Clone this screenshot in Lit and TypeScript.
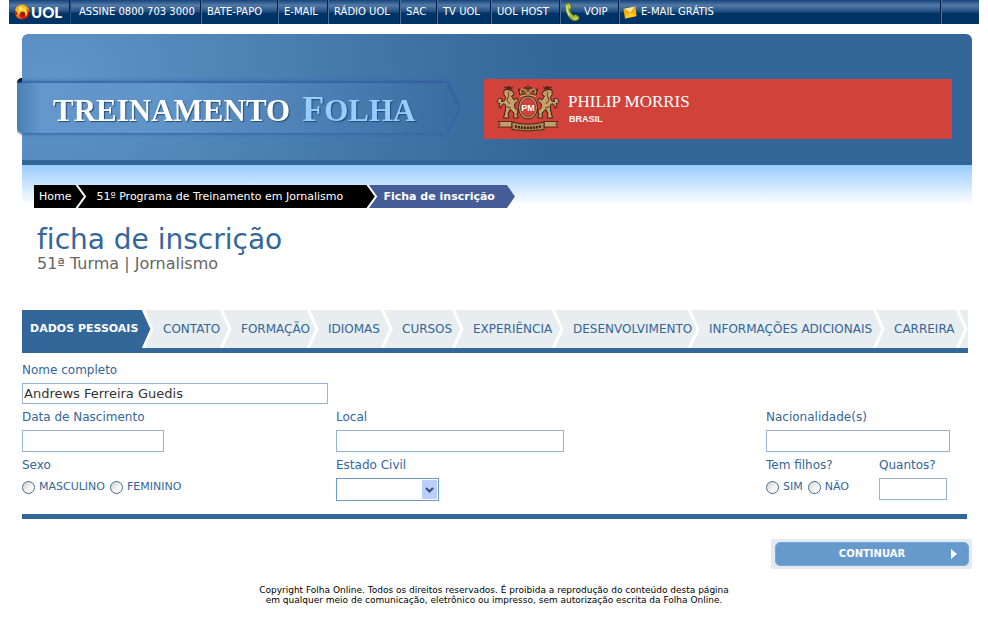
import { LitElement, html, css, svg } from "lit";
import { customElement } from "lit/decorators.js";

const uolGlobe = html`<svg class="globe" width="16" height="16" viewBox="0 0 16 16" aria-hidden="true">
  <circle cx="8" cy="8" r="7.6" fill="#c8200c" />
  <path d="M1 6A7.6 7.6 0 0 1 10 .8Q15 3 15.400 8Q13.500 4.500 10 4Q5 4 3.500 8Q2 8 1 6Z" fill="#f7b519" />
  <path d="M3.500 9.500A5 5 0 0 1 13 6.500Q14.500 10 11 13Q12.500 8.500 9 7.500Q5.500 7 5 12Z" fill="#fbd33a" />
  <circle cx="9" cy="10" r="2" fill="#8b1a08" />
  <path d="M2 11Q4 15 8 14.800Q5 13.500 4.500 10Z" fill="#f08a12" />
  <circle cx="6.500" cy="4.200" r="1.500" fill="#fff2b0" />
</svg>`;

const phoneIcon = html`<svg width="16" height="20" viewBox="0 0 16 20" aria-hidden="true">
  <path d="M1 3Q3 .5 5.500 1Q7.500 3.500 7 6.500L5.500 8Q6.500 11.500 9.500 13.500L11.500 12.500Q14.500 13.500 15.500 16Q14 19 11 19Q7 18.500 4 14Q1 9 1 3Z" fill="#a3ba3e" stroke="#4d6a18" stroke-width=".8" />
  <path d="M2.500 3.500Q2.500 9 5.500 13.500" fill="none" stroke="#dcea86" stroke-width="1.400" />
  <path d="M9.500 17Q12.500 17.500 14 15.500M5 2.500L6 6" fill="none" stroke="#dbe88a" />
</svg>`;

const mailIcon = html`<svg width="14" height="13" viewBox="0 0 14 13" aria-hidden="true">
  <path d="M.5 3L12.500 .5L13.500 10L2 12.500Z" fill="#ffb400" />
  <path d="M.5 3L12.500 .5L7.500 7.500Z" fill="#ffe896" />
  <path d="M.5 3L7.500 7.500L12.500 .5" fill="none" stroke="#e87c00" stroke-width=".9" />
  <path d="M2 12.500L7 7L13.500 10Z" fill="#ffcf2e" />
</svg>`;

const lion = svg`
  <path d="M7 4L11 3.500L16 5.500L17 8.500L14.500 10L17 14L20 12L21 14.500L17.500 18L18 22L21 25L20 29L21.500 32H16.500L17 27L13 23.500L11 28L12 32H6.500L8 26L9 20L7 17.500Q3 20 3.500 22.500Q1 21 3 17.500Q0 18 .5 14Q2 11 5 13Q6.500 15 4 15.500L7 15L9 12Q5.500 9 7 4Z" fill="#c4a06a" stroke="#3b1d14" stroke-width="1" />
  <path d="M8 2.500L7 0L10 1.500L12 -.5L13.500 1.500L16 .5L15 3.500Z" fill="#4a2418" />
  <path d="M11 6L12 9L10 14L13 18M10 21L14 22" fill="none" stroke="#5a3020" stroke-width=".9" />`;

const crest = html`<svg class="crest" width="62" height="46" viewBox="0 0 62 46" aria-hidden="true">
  ${lion}
  <g transform="translate(62 0) scale(-1 1)">${lion}</g>
  <path d="M23 9L21.500 3L25.500 4.500L28 1L31 3L34 1L36.500 4.500L40.500 3L39 9Z" fill="#8d4a2c" stroke="#3b1d14" />
  <path d="M24 8Q22 4 26 3Q29 4 31 8Q33 4 36 3Q40 4 38 8" fill="none" stroke="#c4a06a" stroke-width="1.200" />
  <path d="M23 10.500Q31 7.500 39 10.500" fill="none" stroke="#c4a06a" stroke-width="1.500" />
  <path d="M31 -1V3" stroke="#3b1d14" />
  <ellipse cx="31" cy="21.500" rx="9.500" ry="11.500" fill="#c4a06a" stroke="#3b1d14" />
  <ellipse cx="31" cy="21.500" rx="7.500" ry="9.500" fill="#d1423c" stroke="#5a3020" stroke-width=".7" />
  <text class="mono" x="31" y="25" text-anchor="middle">PM</text>
  <path d="M1 35.500H15V41H1L3.500 38.300Z" fill="#c4a06a" stroke="#3b1d14" stroke-width=".8" />
  <path d="M61 35.500H47V41H61L58.500 38.300Z" fill="#c4a06a" stroke="#3b1d14" stroke-width=".8" />
  <path d="M15 36Q31 40.500 47 36V43.500Q31 46.500 15 43.500Z" fill="#b08a58" stroke="#3b1d14" stroke-width=".9" />
  <path d="M18 40.300Q31 43.500 44 40.300" fill="none" stroke="#3b1d14" stroke-width="2.600" stroke-dasharray="2 1" />
</svg>`;

interface Link { label: string; icon?: unknown }

const portalLinks: Link[] = [
  { label: "ASSINE 0800 703 3000" },
  { label: "BATE-PAPO" },
  { label: "E-MAIL" },
  { label: "RÁDIO UOL" },
  { label: "SAC" },
  { label: "TV UOL" },
  { label: "UOL HOST" },
  { label: "VOIP", icon: phoneIcon },
  { label: "E-MAIL GRÁTIS", icon: mailIcon },
];

const steps = [
  "DADOS PESSOAIS", "CONTATO", "FORMAÇÃO", "IDIOMAS", "CURSOS",
  "EXPERIÊNCIA", "DESENVOLVIMENTO", "INFORMAÇÕES ADICIONAIS", "CARREIRA",
];

@customElement("portal-bar")
export class PortalBar extends LitElement {
  static styles = css`
    :host { display: block; }
    .bar {
      display: grid;
      grid-template-columns: 61px 131px 77px 50px 72px 37px 54px 69px 59px 1fr 38px;
      height: 24px;
      background: linear-gradient(#17437a, #517aa6 22%, #1f4b7f 50%, #003366 54%, #003366);
      font: 10px/24px "DejaVu Sans", Verdana, sans-serif;
    }
    .bar > * {
      display: flex;
      align-items: center;
      gap: 4px;
      padding-left: 5px;
      border-left: 1px solid #4a7099;
      box-shadow: -1px 0 #00214a;
      color: #fff;
      text-decoration: none;
      white-space: nowrap;
    }
    .bar > .first { border-left-color: #2a5385; padding-left: 8px; }
    .bar > .iconic { padding-left: 3px; }
    .bar > .logo {
      border: 0;
      box-shadow: none;
      gap: 1px;
      padding-left: 5px;
      font: 900 15px/24px "Lato", sans-serif;
    }
    .globe { flex: none; }
  `;
  render() {
    return html`<nav class="bar" aria-label="UOL">
      <a class="logo" href="#">${uolGlobe}<span>UOL</span></a>
      ${portalLinks.map((l, i) => html`<a class=${i === 0 ? "first" : l.icon ? "iconic" : ""} href="#">${l.icon ?? ""}<span>${l.label}</span></a>`)}
      <span></span>
    </nav>`;
  }
}

@customElement("site-header")
export class SiteHeader extends LitElement {
  static styles = css`
    :host { display: block; }
    .head {
      display: flex;
      align-items: flex-start;
      height: 126px;
      border-bottom: 5px solid #336699;
      border-radius: 6px 6px 0 0;
      background: radial-gradient(ellipse 500px 420px at 30px 50px, #5f95c8, #336699);
      box-shadow: 0 1px #6d9fce;
    }
    .ribbon {
      position: relative;
      flex: none;
      width: 442px;
      margin: 49px 25px 0 -5px;
      clip-path: inset(-10px -10px -10px 0);
    }
    .shade { filter: drop-shadow(0 -1px 2px #2c549a) drop-shadow(0 1px 1px #3d70a8); }
    .fold {
      position: absolute;
      left: 0;
      top: -5px;
      width: 5px;
      height: 8px;
      border-radius: 5px 0 0 0;
      background: #000;
    }
    .band {
      position: relative;
      display: flex;
      align-items: baseline;
      gap: 12px;
      height: 50px;
      padding-left: 36px;
      clip-path: polygon(0 0, 429px 0, 100% 50%, 429px 100%, 5px 100%, 0 46px);
      background: linear-gradient(90deg, #4880b5, #6497cb 24px, #5f94c8 150px, #3a6ca0);
      font: bold 31px/52px "Liberation Serif", serif;
      color: #fff;
      text-shadow: 1px 1px 1px #234a75;
    }
    .folha { color: #99ccff; }
    .initial { font-size: 36px; }
    .sponsor {
      flex: 1;
      display: flex;
      align-items: center;
      height: 60px;
      margin: 45px 20px 0 0;
      padding-left: 13px;
      gap: 9px;
      background: #d1423a;
      color: #fff;
      text-decoration: none;
    }
    .crest { flex: none; overflow: visible; }
    .mono { font: bold 9px "Liberation Sans", sans-serif; fill: #fff; }
    .name { font: 17px/20px "Liberation Serif", serif; display: block; white-space: nowrap; }
    .country { font: bold 9px/14px "Liberation Sans", sans-serif; display: block; padding-left: 1px; }
  `;
  render() {
    return html`<header class="head">
      <div class="ribbon">
        <span class="fold"></span>
        <div class="shade">
          <div class="band"><span>TREINAMENTO</span><span class="folha"><span class="initial">F</span>OLHA</span></div>
        </div>
      </div>
      <a class="sponsor" href="#">${crest}<span><span class="name">PHILIP MORRIS</span><span class="country">BRASIL</span></span></a>
    </header>`;
  }
}

@customElement("crumb-trail")
export class CrumbTrail extends LitElement {
  static styles = css`
    :host { display: block; }
    .trail {
      display: flex;
      height: 23px;
      font: 11px/23px "DejaVu Sans", Verdana, sans-serif;
      color: #fff;
    }
    a { color: #fff; text-decoration: none; background: #000; padding: 0 4px 0 5px; white-space: nowrap; }
    .program { padding: 0 8px 0 9px; width: 262px; }
    .current {
      font-weight: bold;
      background: #465c96;
      margin-left: -1px;
      padding: 0 20px 0 6px;
      clip-path: polygon(0 0, calc(100% - 8px) 0, 100% 50%, calc(100% - 8px) 100%, 0 100%);
      white-space: nowrap;
    }
    svg { flex: none; }
    .before { fill: #000; }
    .after { fill: #000; }
    .after.blue { fill: #465c96; }
    .stroke { fill: none; stroke: #fff; stroke-width: 2; }
  `;
  private chevron(next: string) {
    return html`<svg width="12" height="23" viewBox="0 0 12 23" aria-hidden="true">
      <rect class=${"after " + next} width="12" height="23" />
      <path class="before" d="M0 0H1L10 11.500L1 23H0Z" />
      <path class="stroke" d="M1 -1L10 11.500L1 24" />
    </svg>`;
  }
  render() {
    return html`<nav class="trail" aria-label="Navegação">
      <a href="#">Home</a>${this.chevron("")}
      <a class="program" href="#">51º Programa de Treinamento em Jornalismo</a>${this.chevron("blue")}
      <span class="current" aria-current="page">Ficha de inscrição</span>
    </nav>`;
  }
}

@customElement("step-tabs")
export class StepTabs extends LitElement {
  static properties = { current: { type: Number } };
  declare current: number;
  constructor() {
    super();
    this.current = 0;
  }
  static styles = css`
    :host { display: block; }
    .tabs {
      display: grid;
      grid-template-columns: 132fr 78fr 87fr 74fr 71fr 100fr 136fr 185fr 83fr;
      height: 38px;
      border-bottom: 5px solid #336699;
      background: #e8edef;
      font: 12px/38px "DejaVu Sans", Verdana, sans-serif;
    }
    .tab {
      display: flex;
      justify-content: space-between;
      min-width: 0;
      padding-left: 9px;
      color: #336699;
      text-decoration: none;
      white-space: nowrap;
    }
    .active {
      padding-left: 8px;
      color: #fff;
      font-weight: bold;
      font-size: 11px;
      background: linear-gradient(90deg, #336699 calc(100% - 12px), #e8edef 0);
    }
    svg { flex: none; margin-left: -6px; }
    .edge { fill: none; stroke: #fff; stroke-width: 3; }
    .fill { fill: none; }
    .active .fill { fill: #336699; }
  `;
  render() {
    return html`<nav class="tabs" aria-label="Etapas">
      ${steps.map((s, i) => html`<a class=${i === this.current ? "tab active" : "tab"} href="#"><span>${s}</span><svg width="12" height="38" viewBox="0 0 12 38" aria-hidden="true">
        <path class="fill" d="M0 0H1L10 19L1 38H0Z" /><path class="edge" d="M1 -1L10 19L1 39" />
      </svg></a>`)}
    </nav>`;
  }
}

@customElement("personal-form")
export class PersonalForm extends LitElement {
  static styles = css`
    :host { display: block; }
    * { box-sizing: border-box; }
    form { font: 12px/20px "DejaVu Sans", Verdana, sans-serif; color: #336699; }
    .rows {
      display: grid;
      grid-template-columns: 314fr 430fr 201fr;
      row-gap: 3px;
      margin-right: 1px;
      padding: 7px 0 14px;
      border-bottom: 5px solid #336699;
    }
    .field { display: grid; grid-template-rows: 20px 22px; row-gap: 3px; min-width: 0; }
    .full { grid-column: 1 / -1; grid-template-rows: 20px 21px; }
    .pair { display: flex; }
    .kids { flex: none; width: 113px; }
    fieldset { border: 0; margin: 0; padding: 0; min-width: 0; }
    legend { padding: 0; height: 20px; margin-bottom: 3px; }
    input, select {
      font: inherit;
      font-size: 13px;
      height: 100%;
      margin: 0;
      padding: 0 1px;
      border: 1px solid #95b3d3;
      border-radius: 0;
      background: #fff;
      color: #333;
      outline: 0;
    }
    .name { width: 306px; }
    .birth { width: 142px; }
    .place { width: 228px; }
    .nation { width: 184px; }
    .count { width: 68px; }
    .choices { display: flex; align-items: center; gap: 5px; height: 18px; font-size: 11px; }
    .choices label { display: flex; align-items: center; gap: 4px; }
    input[type="radio"] {
      appearance: none;
      width: 13px;
      height: 13px;
      padding: 0;
      border: 1px solid #3d6d9c;
      border-radius: 50%;
      background: linear-gradient(135deg, #d6d6d2, #fff 80%);
    }
    .combo { position: relative; width: 103px; height: 23px; }
    .combo select { display: block; appearance: none; width: 100%; border-color: #6f9ac8; }
    .arrow { position: absolute; right: 2px; top: 2px; pointer-events: none; }
    .submit { display: flex; width: 201px; margin: 20px -4px 0 auto; padding: 3px 3px 3px 4px; background: #e5eaf2; border-radius: 2px; }
    button {
      flex: 1;
      display: grid;
      grid-template-columns: 1fr auto 1fr;
      align-items: center;
      height: 24px;
      padding: 0 11px;
      border: 1px solid #7aa7d6;
      border-radius: 5px;
      background: #6699cc;
      color: #fff;
      font: bold 10px/22px "DejaVu Sans", Verdana, sans-serif;
    }
    button svg { grid-column: 3; justify-self: end; }
    button span { grid-column: 2; }
  `;
  render() {
    return html`<form>
      <div class="rows">
        <div class="field full"><label for="name">Nome completo</label><input class="name" id="name" type="text" .value=${"Andrews Ferreira Guedis"} /></div>
        <div class="field"><label for="birth">Data de Nascimento</label><input class="birth" id="birth" type="text" /></div>
        <div class="field"><label for="place">Local</label><input class="place" id="place" type="text" /></div>
        <div class="field"><label for="nation">Nacionalidade(s)</label><input class="nation" id="nation" type="text" /></div>
        <fieldset>
          <legend>Sexo</legend>
          <div class="choices">
            <label><input type="radio" name="sex" />MASCULINO</label>
            <label><input type="radio" name="sex" />FEMININO</label>
          </div>
        </fieldset>
        <div class="field">
          <label for="civil">Estado Civil</label>
          <div class="combo">
            <select id="civil"><option></option></select>
            <svg class="arrow" width="15" height="19" viewBox="0 0 15 19" aria-hidden="true">
              <rect width="15" height="19" rx="1" fill="#bccffb" />
              <path d="M4 8L7.500 11.500L11 8" fill="none" stroke="#3d4f78" stroke-width="2.200" />
            </svg>
          </div>
        </div>
        <div class="pair">
          <fieldset class="kids">
            <legend>Tem filhos?</legend>
            <div class="choices">
              <label><input type="radio" name="kids" />SIM</label>
              <label><input type="radio" name="kids" />NÃO</label>
            </div>
          </fieldset>
          <div class="field"><label for="count">Quantos?</label><input class="count" id="count" type="text" /></div>
        </div>
      </div>
      <div class="submit">
        <button type="button"><span>CONTINUAR</span><svg width="6" height="10" viewBox="0 0 6 10" aria-hidden="true"><path d="M0 0L6 5L0 10Z" fill="#fff" /></svg></button>
      </div>
    </form>`;
  }
}

@customElement("app-root")
export class AppRoot extends LitElement {
  static styles = css`
    :host {
      display: block;
      min-height: 100vh;
      padding: 0 9px;
      box-sizing: border-box;
      background: #fff;
      font-family: "DejaVu Sans", Verdana, sans-serif;
    }
    .page { margin: 10px 7px 0 13px; }
    .intro {
      padding: 20px 12px 0;
      height: 125px;
      background: linear-gradient(#99ccff, #fff 40px);
    }
    h1 { margin: 16px 0 0 3px; font-size: 28px; line-height: 32px; font-weight: normal; font-variant-ligatures: none; color: #336699; }
    .sub { margin: 0 0 0 3px; font-size: 16px; line-height: 16px; color: #666; }
    .content { margin-right: 4px; }
    footer { padding-top: 16px; text-align: center; font-size: 9px; line-height: 10px; color: #000; }
    footer p { margin: 0; }
  `;
  render() {
    return html`<portal-bar></portal-bar>
      <div class="page">
        <site-header></site-header>
        <div class="intro">
          <crumb-trail></crumb-trail>
          <h1>ficha de inscrição</h1>
          <p class="sub">51ª Turma | Jornalismo</p>
        </div>
        <main class="content">
          <step-tabs></step-tabs>
          <personal-form></personal-form>
        </main>
      </div>
      <footer>
        <p>Copyright Folha Online. Todos os direitos reservados. É proibida a reprodução do conteúdo desta página</p>
        <p>em qualquer meio de comunicação, eletrônico ou impresso, sem autorização escrita da Folha Online.</p>
      </footer>`;
  }
}
